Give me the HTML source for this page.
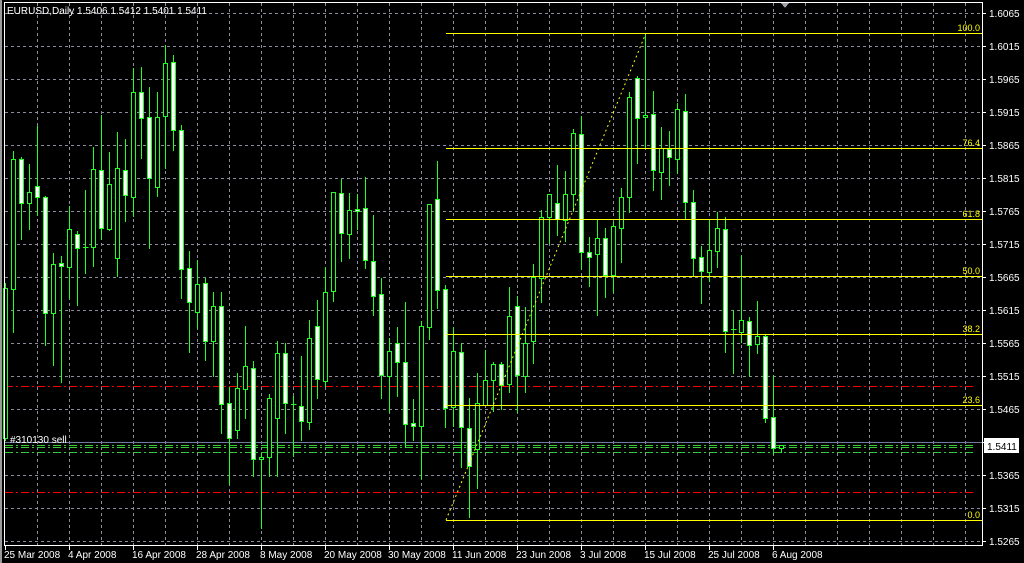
<!DOCTYPE html>
<html><head><meta charset="utf-8"><style>
html,body{margin:0;padding:0;background:#000;width:1024px;height:563px;overflow:hidden}
svg{display:block}
text{font-family:"Liberation Sans",sans-serif}
</style></head><body>
<svg id="c" width="1024" height="563" xmlns="http://www.w3.org/2000/svg" shape-rendering="crispEdges">
<rect width="1024" height="563" fill="#000"/>
<rect x="0" y="0" width="2" height="563" fill="#9a9a9a"/>
<g id="grid" stroke="#8c8c9c" stroke-width="1" stroke-dasharray="3,3"></g>
<g id="lines"></g>
<g id="candles"></g>
<g id="fib"></g>
<rect x="4.5" y="2.5" width="978" height="543" fill="none" stroke="#fff"/>
<polygon points="781,3 789,3 785,8" fill="#a0a0a8"/>
<text x="7" y="14" fill="#fff" font-size="10">EURUSD,Daily  1.5406 1.5412 1.5401 1.5411</text>
<text x="10" y="443" fill="#fff" font-size="10">#310130 sell</text>
<g id="axis" fill="#fff" font-size="10"></g>
<rect x="984" y="438" width="35" height="15" fill="#fff"/>
<text x="987" y="450" fill="#000" font-size="10">1.5411</text>
</svg>
<script>
var NS="http://www.w3.org/2000/svg";
function el(p,t,a,txt){var e=document.createElementNS(NS,t);for(var k in a)e.setAttribute(k,a[k]);if(txt)e.textContent=txt;document.getElementById(p).appendChild(e);return e;}
for(var j=0;j<=16;j++){var y=13+33*j+0.5;el("grid","line",{x1:5,y1:y,x2:982,y2:y});}
for(var i=0;i<30;i++){var x=37+32*i+0.5;if(x<982)el("grid","line",{x1:x,y1:3,x2:x,y2:545});}
// price labels
var p=1.6065;for(var j=0;j<=16;j++){var y=13+33*j;el("axis","line",{x1:982,y1:y+0.5,x2:986,y2:y+0.5,stroke:"#fff"});el("axis","text",{x:989,y:y+4},(p-0.005*j).toFixed(4));}
var dates=["25 Mar 2008","4 Apr 2008","16 Apr 2008","28 Apr 2008","8 May 2008","20 May 2008","30 May 2008","11 Jun 2008","23 Jun 2008","3 Jul 2008","15 Jul 2008","25 Jul 2008","6 Aug 2008"];
for(var i=0;i<dates.length;i++){var x=5+64*i;el("axis","line",{x1:x+0.5,y1:545,x2:x+0.5,y2:550,stroke:"#fff"});el("axis","text",{x:x-1,y:558},dates[i]);}
// horizontal lines
el("lines","line",{x1:5,y1:386.5,x2:975,y2:386.5,stroke:"#f00","stroke-dasharray":"8,3,2,3"});
el("lines","line",{x1:5,y1:492.5,x2:975,y2:492.5,stroke:"#f00","stroke-dasharray":"8,3,2,3"});
el("lines","line",{x1:5,y1:442.5,x2:982,y2:442.5,stroke:"#6c7c9c"});
el("lines","line",{x1:5,y1:445.5,x2:975,y2:445.5,stroke:"#3c3","stroke-dasharray":"8,3,2,3"});
el("lines","line",{x1:5,y1:447.5,x2:975,y2:447.5,stroke:"#3c3","stroke-dasharray":"8,3,2,3"});
el("lines","line",{x1:5,y1:452.5,x2:975,y2:452.5,stroke:"#3c3","stroke-dasharray":"8,3,2,3"});
var D=[[5,283,288,438,440,0],[13,151,159,289,332,0],[21,157,159,203,239,1],[29,164,192,203,229,0],[37,126,186,197,215,1],[45,196,197,313,345,1],[53,253,264,313,365,0],[61,256,263,266,382,1],[69,206,229,267,298,0],[77,231,234,248,305,1],[85,190,247,247,273,0],[93,147,169,247,266,0],[101,115,170,228,239,1],[109,152,184,229,230,0],[117,132,168,258,276,0],[125,139,170,195,221,1],[133,68,92,197,216,0],[141,67,92,118,158,1],[149,87,117,178,248,1],[157,92,117,187,196,0],[165,45,63,116,168,0],[173,55,62,130,150,1],[181,125,130,269,298,1],[189,251,268,302,352,1],[197,260,284,312,328,0],[205,278,283,341,360,1],[213,292,306,341,376,0],[221,292,306,404,433,1],[229,387,403,438,484,1],[237,373,388,430,438,0],[245,326,366,389,418,0],[253,361,368,459,476,1],[261,453,457,459,528,0],[269,394,398,457,476,0],[277,341,353,418,476,0],[285,343,353,403,433,1],[293,396,404,404,456,0],[301,356,406,421,440,1],[309,320,338,422,429,0],[317,300,326,379,398,1],[325,267,292,381,386,0],[333,192,192,291,301,0],[341,179,193,233,261,1],[349,193,210,234,258,0],[357,194,209,211,229,1],[365,177,208,260,268,1],[373,215,261,296,315,1],[381,278,294,375,398,1],[389,338,351,376,412,0],[397,327,343,362,396,1],[405,302,362,424,447,1],[413,399,423,426,440,1],[421,321,326,426,478,0],[429,296,204,327,339,0],[437,161,199,290,308,1],[445,285,289,408,427,1],[453,327,351,407,426,0],[461,343,352,427,467,1],[469,398,428,466,517,1],[477,373,403,449,488,0],[485,350,380,405,405,0],[493,362,364,380,411,0],[501,362,364,385,409,1],[509,287,316,384,392,0],[517,296,306,375,412,1],[525,307,343,376,392,0],[533,264,277,341,363,0],[541,210,217,278,302,0],[549,194,194,217,243,0],[557,165,203,219,235,1],[565,171,194,220,241,0],[573,129,133,194,211,0],[581,116,134,252,269,1],[589,237,252,257,286,1],[597,220,238,254,315,0],[605,228,238,275,297,1],[613,222,226,275,292,0],[621,188,197,228,262,0],[629,92,97,197,212,0],[637,76,78,118,163,1],[645,33,115,117,147,0],[653,91,114,170,190,1],[661,127,148,172,199,0],[669,131,149,157,185,1],[677,103,109,159,173,0],[685,94,111,202,219,1],[693,190,202,258,276,1],[701,246,257,271,303,1],[709,219,250,272,281,0],[717,212,228,251,267,0],[725,217,229,331,352,1],[733,310,329,329,373,0],[741,255,320,332,342,0],[749,317,321,345,376,1],[757,301,336,344,353,0],[765,335,336,418,422,1],[773,375,417,448,454,1],[781,445,445,448,452,0]];
D.forEach(function(d){var x=d[0]+0.5;el("candles","line",{x1:x,y1:d[1],x2:x,y2:d[4]+1,stroke:"#2f2"});
var t=Math.min(d[2],d[3]),b=Math.max(d[2],d[3]);
if(b-t<1){el("candles","line",{x1:x-2.5,y1:t+0.5,x2:x+3,y2:t+0.5,stroke:"#2f2"});}
else el("candles","rect",{x:d[0]-2+0.5,y:t+0.5,width:4,height:b-t,fill:d[5]?"#fff":"#000",stroke:"#2f2"});});
// fib
[[33,"100.0"],[148,"76.4"],[219,"61.8"],[276,"50.0"],[334,"38.2"],[405,"23.6"],[520,"0.0"]].forEach(function(f){
el("fib","line",{x1:446,y1:f[0]+0.5,x2:982,y2:f[0]+0.5,stroke:"#ff0"});
el("fib","text",{x:980,y:f[0]-2,fill:"#ff0","font-size":"9","text-anchor":"end"},f[1]);});
el("fib","line",{x1:446,y1:520,x2:646,y2:33,stroke:"#ff0","stroke-dasharray":"2,3","shape-rendering":"auto"});
</script>
</body></html>
